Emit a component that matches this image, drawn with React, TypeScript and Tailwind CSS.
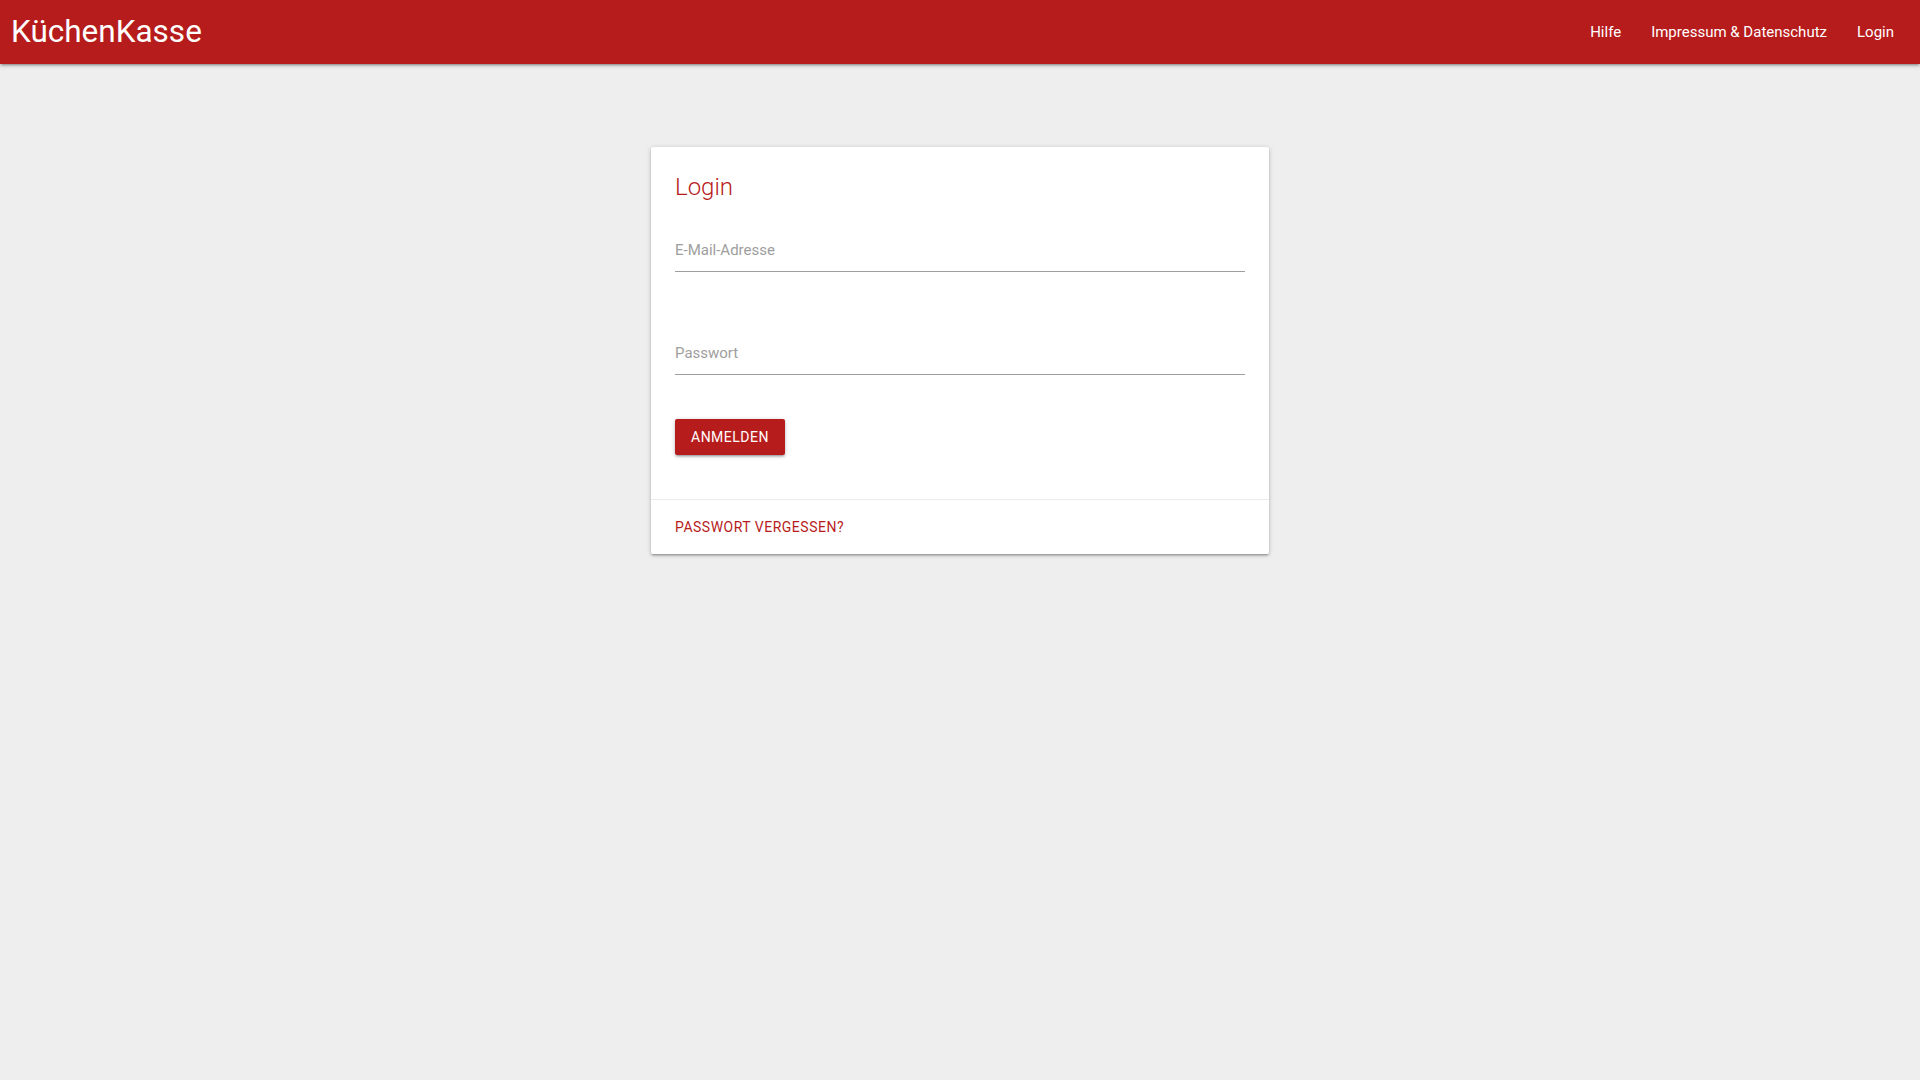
import { ReactElement } from "react";

const depth1 =
  "shadow-[0_2px_2px_0_rgba(0,0,0,0.14),0_3px_1px_-2px_rgba(0,0,0,0.12),0_1px_5px_0_rgba(0,0,0,0.2)]";

const inputCls =
  "box-content block h-[42px] w-full border-b border-[#9e9e9e] bg-transparent p-0 pt-[6px] text-[15px] outline-none placeholder:text-[#9e9e9e]";

function NavBar(): ReactElement {
  const links = ["Hilfe", "Impressum & Datenschutz", "Login"];
  return (
    <nav
      className={`relative z-10 flex h-16 items-center justify-between bg-[#b71c1c] text-white ${depth1}`}
    >
      <a href="#" className="pl-[11px] text-[31.5px] leading-[64px]">
        KüchenKasse
      </a>
      <ul className="flex pr-[11px]">
        {links.map((l) => (
          <li key={l}>
            <a href="#" className="block px-[15px] text-[15px] leading-[64px]">
              {l}
            </a>
          </li>
        ))}
      </ul>
    </nav>
  );
}

function LoginCard(): ReactElement {
  return (
    <div className={`mx-auto w-[618px] rounded-[2px] bg-white ${depth1}`}>
      <div className="px-6 pt-6 pb-[44px]">
        <h2 className="text-2xl leading-8 font-light text-[#b71c1c]">Login</h2>
        <input
          type="email"
          placeholder="E-Mail-Adresse"
          className={`mt-5 ${inputCls}`}
        />
        <input
          type="password"
          placeholder="Passwort"
          className={`mt-[54px] ${inputCls}`}
        />
        <button
          className={`mt-[44px] h-9 rounded-[2px] bg-[#b71c1c] px-4 text-sm tracking-[0.5px] text-white uppercase ${depth1}`}
        >
          Anmelden
        </button>
      </div>
      <div className="border-t border-[rgba(160,160,160,0.2)] px-6 py-4">
        <a
          href="#"
          className="block text-sm leading-[22px] tracking-[0.5px] text-[#b71c1c] uppercase"
        >
          Passwort vergessen?
        </a>
      </div>
    </div>
  );
}

export default function App(): ReactElement {
  return (
    <div className="min-h-screen bg-[#eeeeee] font-['Roboto',sans-serif] antialiased">
      <NavBar />
      <main className="pt-[83px]">
        <LoginCard />
      </main>
    </div>
  );
}
